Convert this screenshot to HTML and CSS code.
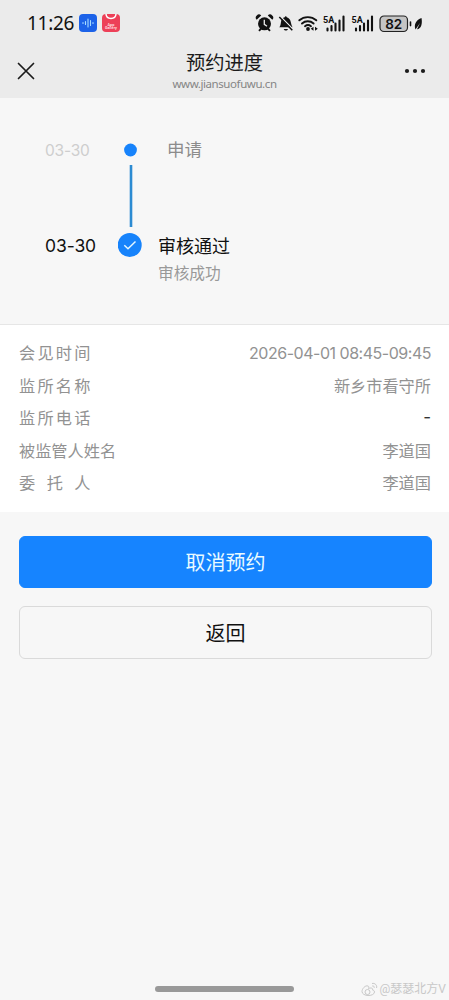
FILE: index.html
```
<!DOCTYPE html>
<html lang="zh-CN">
<head>
<meta charset="utf-8">
<title>预约进度</title>
<link rel="stylesheet" href="styles.css">
</head>
<body>
<div class="screen">
  <header class="top">
    <div class="status">
      <span class="clock">11:26</span>
      <svg class="app" width="18" height="18" viewBox="0 0 18 18"><rect width="18" height="18" rx="4" fill="#1c62e8"/><path d="M4 8.500v1M6.500 7.500v3M9 5v8M11.500 6.500v5M14 8.500v1" stroke="#a8dcff" stroke-width="1.100" stroke-linecap="round"/></svg>
      <svg class="app gallery" width="18" height="18" viewBox="0 0 18 18"><rect width="18" height="18" rx="4" fill="#ed4058"/><path d="M4 0c.5 6 9.500 6 10 0" fill="none" stroke="#fff" stroke-width="1.500"/><text x="9" y="11.500" text-anchor="middle" class="mini">App</text><text x="9" y="15.300" text-anchor="middle" class="mini">Gallery</text></svg>
      <svg class="tray" width="170" height="22" viewBox="0 0 170 22">
        <g fill="#111">
          <circle cx="9.500" cy="11.800" r="6.500"/>
          <path d="M1.700 7.800a3 3 0 0 1 4.500-4.300zM17.300 7.800a3 3 0 0 0-4.500-4.300z"/>
          <path d="M4 18.900l2.500-2.700M15 18.900l-2.500-2.700" stroke="#111" stroke-width="1.900"/>
          <path d="M9.300 7.800v4.500l2.700 1.900" fill="none" stroke="#ebebeb" stroke-width="1.300"/>
          <path d="M24.300 15.200c2-1.800 1.200-5.300 2.400-7.700 1-1.500 2.300-2 3-2.200.2-1.400 1.900-1.400 2.100 0 4.700 1.300 3.700 6.600 5.700 9.900zM28.700 16.900h4.300c-.8 2-3.500 2-4.300 0z"/>
          <path d="M25.200 4.200L38 17.300" stroke="#ebebeb" stroke-width="1.300"/>
          <path d="M24.300 5L37.300 18.300" stroke="#111" stroke-width="1.500"/>
          <circle cx="53" cy="17" r="1.900"/>
          <path d="M58.500 14.800v4l-2.800-2zM60 14.800v4l2.800-2z"/>
        </g>
        <path d="M44.300 8.300a13 13 0 0 1 17 0M47 11.500a8.800 8.800 0 0 1 11.600 0M50 14.200a4.700 4.700 0 0 1 6 0" fill="none" stroke="#111" stroke-width="1.900" stroke-linecap="round"/>
        <g id="sim">
          <text x="68" y="10.700" class="net">5A</text>
          <path d="M72.500 16.500v2M76.500 14v4.500M80.500 11.500v7M84.500 8.500v10M88.500 4.500v14" stroke="#111" stroke-width="2.100" stroke-linecap="round"/>
        </g>
        <use href="#sim" x="28.500"/>
        <rect x="125" y="4" width="27.500" height="15.500" rx="4" fill="#c4c4c4" stroke="#222" stroke-width="1.200"/>
        <text x="138.700" y="16.700" text-anchor="middle" class="charge">82</text>
        <path d="M155.500 10v3.600" stroke="#111" stroke-width="1.600" stroke-linecap="round"/>
        <path d="M160.500 17.600c-2-5.500 1-9.800 6-11.600 1 5.500 0 10.800-4.500 11.300l3-6.200z" fill="#111"/>
      </svg>
    </div>
    <nav class="nav">
      <svg class="close" width="18" height="18" viewBox="0 0 18 18"><path d="M1.500 1.500l15 15M16.500 1.500l-15 15" stroke="#1b1b1b" stroke-width="1.700" stroke-linecap="round"/></svg>
      <div class="heading"><h1>预约进度</h1><p>www.jiansuofuwu.cn</p></div>
      <svg class="more" width="22" height="6" viewBox="0 0 22 6" fill="#1b1b1b"><circle cx="3" cy="3" r="2.100"/><circle cx="11" cy="3" r="2.100"/><circle cx="19" cy="3" r="2.100"/></svg>
    </nav>
  </header>

  <section class="timeline">
    <span class="date past">03-30</span>
    <svg class="track" width="24" height="116" viewBox="0 0 24 116"><circle cx="12.500" cy="8" r="6.400" fill="#1783fb"/><path d="M13 23v62" stroke="#2c8bd2" stroke-width="2.600"/><circle cx="11.700" cy="103" r="12" fill="#1783fb"/><path d="M6.300 103.300l3.700 3.500 7.500-7.300" fill="none" stroke="#e4f6ff" stroke-width="1.500"/></svg>
    <span class="step past-step">申请</span>
    <span class="date now">03-30</span>
    <div class="step"><strong>审核通过</strong><small>审核成功</small></div>
  </section>

  <dl class="details">
    <div class="row"><dt class="wide">会见时间</dt><dd class="time">2026-04-01 08:45-09:45</dd></div>
    <div class="row"><dt class="wide">监所名称</dt><dd>新乡市看守所</dd></div>
    <div class="row"><dt class="wide">监所电话</dt><dd class="none">-</dd></div>
    <div class="row"><dt>被监管人姓名</dt><dd>李道国</dd></div>
    <div class="row"><dt class="widest">委托人</dt><dd>李道国</dd></div>
  </dl>

  <div class="actions">
    <button class="btn primary">取消预约</button>
    <button class="btn">返回</button>
  </div>

  <footer class="bottom">
    <div class="homebar"></div>
    <div class="watermark"><svg width="17" height="15" viewBox="0 0 17 15" fill="none" stroke="#c8c8c8"><path d="M7 4C4 3 1 7 1 9.500c0 5 12 5.500 12.500.5 0-1.500-1.500-2-2-2 .8-2-1.500-2.500-4-1.500C8 5 7.800 4.300 7 4z"/><circle cx="6.500" cy="10" r="2.500"/><path d="M11 1.500c3-.8 5.500 2 4.500 4.500M11.200 4c1.500-.3 2.300.5 2 1.800"/></svg><span>@瑟瑟北方V</span></div>
  </footer>
</div>
</body>
</html>
```
FILE: styles.css
```
* { box-sizing: border-box; }
body, h1, p, dl, dd { margin: 0; }
body {
  background: #f7f7f7;
  font-family: Roboto, "Noto Sans CJK SC", sans-serif;
  color: #111;
}
.screen { height: 1000px; display: flex; flex-direction: column; overflow: hidden; }
.top { background: #ebebeb; height: 98px; flex: none; }
.status { height: 46px; display: flex; align-items: center; padding: 0 24px 0 27px; }
.clock { font: 19px/24px "Noto Sans", sans-serif; letter-spacing: -.3px; width: 52px; color: #111; }
.app { flex: none; }
.gallery { margin-left: 5px; }
.tray { margin-left: auto; flex: none; }
.mini { font: bold 3.8px Roboto, sans-serif; fill: #ffd9dd; }
.net { font: bold 9px Roboto, sans-serif; fill: #111; }
.charge { font: 600 13.5px Inter, sans-serif; fill: #111; }
.nav { height: 52px; display: grid; grid-template-columns: 60px 1fr 60px; }
.close { margin: 16px 0 0 17px; }
.more { margin: 22px 0 0 15px; }
.heading { text-align: center; }
.heading h1 { font-size: 19.3px; font-weight: 400; line-height: 28px; margin-top: 4px; color: #1b1b1b; }
.heading p { font: 11.5px/14px "Noto Sans", sans-serif; letter-spacing: -.42px; color: #858585; margin-top: -1px; }

.timeline {
  height: 226px; flex: none; padding: 44px 0 0 45px;
  display: grid; grid-template-columns: 73px 40px 1fr; grid-template-rows: 94px 80px;
}
.date { font-family: Inter, sans-serif; }
.past { font-size: 15.5px; letter-spacing: -.2px; line-height: 17px; color: #cecece; }
.now { font-size: 17.5px; letter-spacing: -.1px; color: #111; grid-row: 2; grid-column: 1; line-height: 19px; }
.track { grid-row: 1 / 3; grid-column: 2; }
.step { display: flex; flex-direction: column; grid-column: 3; }
.past-step { padding-left: 9px; font-size: 17.5px; line-height: 16px; color: #8c8c8c; }
.step strong { font-size: 18px; font-weight: 400; line-height: 20px; color: #111; margin-top: 1px; }
.step small { font-size: 15.7px; line-height: 24px; color: #999; margin-top: 5px; }

.details {
  height: 188px; flex: none; background: #fff; border-top: 1px solid #e6e6e6;
  padding: 11px 18px 0 19px; font-size: 16.2px; color: #929292;
}
.row { height: 32.5px; display: flex; justify-content: space-between; align-items: center; }
.wide { letter-spacing: 2.2px; }
.widest { letter-spacing: 11.5px; }
.time { font-family: Inter, sans-serif; font-size: 16px; letter-spacing: -.48px; margin-top: 1px; }
.none { font-family: Inter, sans-serif; color: #333; font-size: 17px; }

.actions { padding: 24px 17px 0 19px; display: grid; gap: 18px; }
.btn {
  height: 53px; border: 1px solid #dadada; border-radius: 6px; background: #f7f7f7;
  font: 20px/28px "Noto Sans CJK SC", sans-serif; color: #111; padding: 0;
}
.primary { height: 52px; background: #1684ff; border-color: #1684ff; color: #e9fbff; }

.bottom { margin-top: auto; height: 24px; position: relative; }
.homebar { width: 139px; height: 6px; border-radius: 3px; background: #999; margin: 10px auto 0; }
.watermark {
  position: absolute; right: 3px; bottom: 2px; display: flex; align-items: center; gap: 2px;
  font-size: 12px; line-height: 18px; color: #c8c8c8;
}
```
